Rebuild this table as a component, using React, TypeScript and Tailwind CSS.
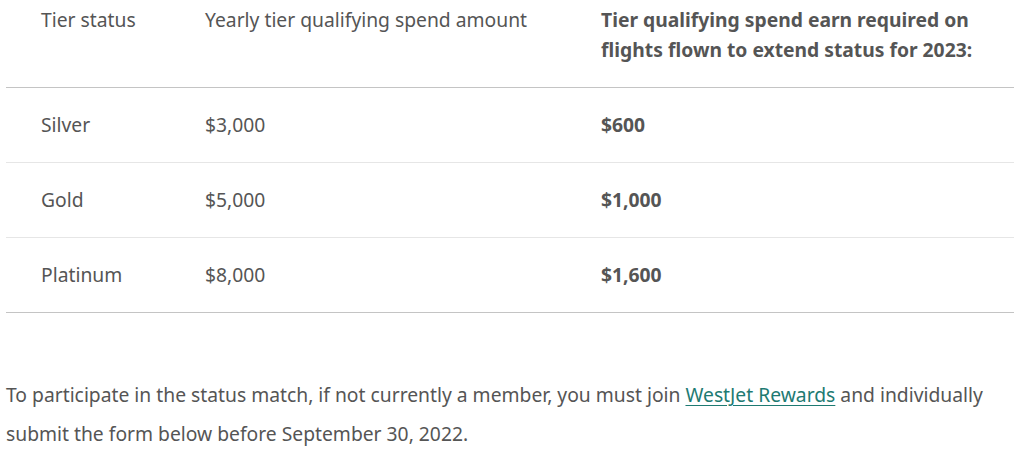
const rows = [
  { tier: "Silver", yearly: "$3,000", earn: "$600" },
  { tier: "Gold", yearly: "$5,000", earn: "$1,000" },
  { tier: "Platinum", yearly: "$8,000", earn: "$1,600" },
];

export default function App() {
  return (
    <div className="w-[1024px] h-[457px] bg-white overflow-hidden text-[#555555] font-['Noto_Sans',sans-serif] text-[19.3px]">
      <table className="ml-[6px] w-[1008px] border-collapse table-fixed">
        <colgroup>
          <col className="w-[164px]" />
          <col className="w-[396px]" />
          <col />
        </colgroup>
        <thead>
          <tr className="border-b border-[#c4c4c4]">
            <th className="pl-[35px] pr-4 pt-[5px] pb-[22px] text-left align-top font-normal leading-[30px]">Tier status</th>
            <th className="pl-[35px] pr-4 pt-[5px] pb-[22px] text-left align-top font-normal leading-[30px]">Yearly tier qualifying spend amount</th>
            <th className="pl-[35px] pr-[30px] pt-[5px] pb-[22px] text-left align-top font-bold leading-[30px]">
              Tier qualifying spend earn required on flights flown to extend status for 2023:
            </th>
          </tr>
        </thead>
        <tbody>
          {rows.map((r, i) => (
            <tr key={r.tier} className={i === rows.length - 1 ? "border-b border-[#c4c4c4]" : "border-b border-[#e6e6e6]"}>
              <td className="pl-[35px] py-[22px] leading-[30px]">{r.tier}</td>
              <td className="pl-[35px] py-[22px] leading-[30px]">{r.yearly}</td>
              <td className="pl-[35px] py-[22px] leading-[30px] font-bold">{r.earn}</td>
            </tr>
          ))}
        </tbody>
      </table>
      <p className="ml-[6px] mt-[62px] w-[1000px] leading-[39px]">
        To participate in the status match, if not currently a member, you must join{" "}
        <a href="#" className="text-[#1e7a72] underline underline-offset-[3px]">WestJet Rewards</a>{" "}
        and individually submit the form below before September 30, 2022.
      </p>
    </div>
  );
}
